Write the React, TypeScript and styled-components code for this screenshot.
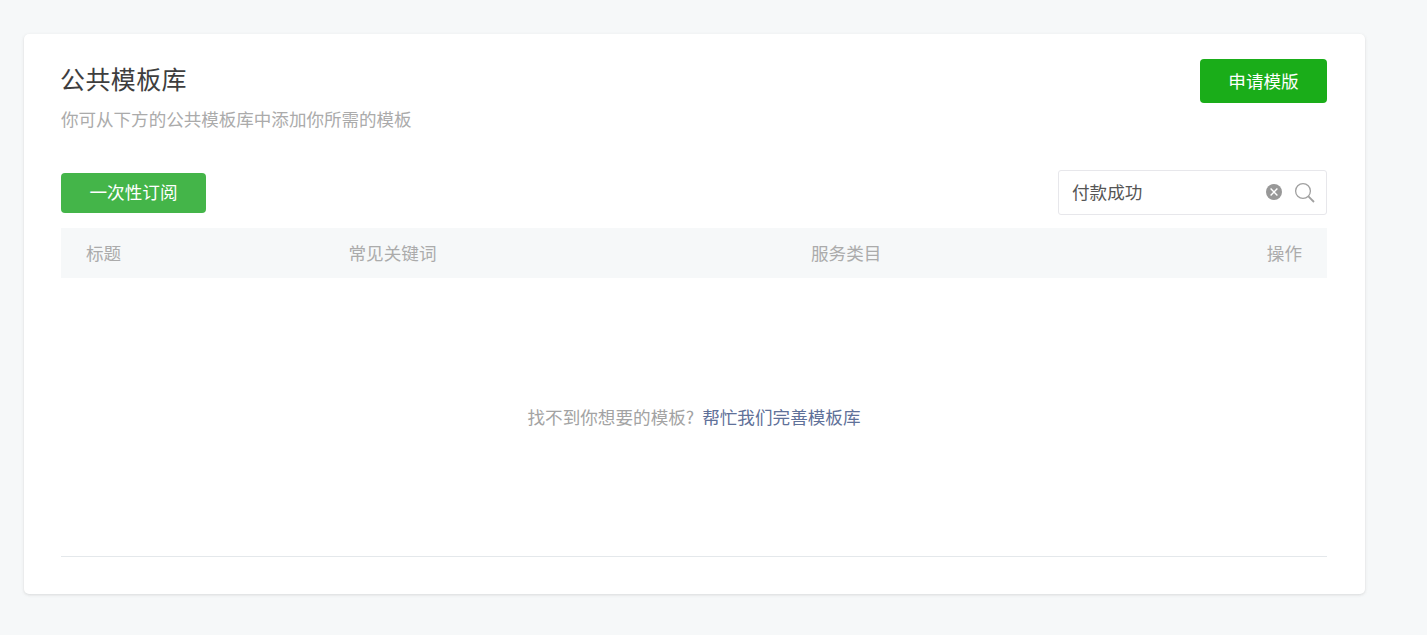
import styled, { createGlobalStyle } from "styled-components";

const GlobalStyle = createGlobalStyle`
    html, body {
        margin: 0;
        padding: 0;
        background: #f6f8f9;
    }
    body {
        font-family: "Noto Sans CJK SC", "Liberation Sans", sans-serif;
    }
`;

const Page = styled.div`
    width: 1427px;
    height: 635px;
    padding: 34px 62px 0 24px;
    box-sizing: border-box;
    overflow: hidden;
`;

const Card = styled.section`
    height: 560px;
    padding: 25px 38px 0 37px;
    box-sizing: border-box;
    background: #fff;
    border-radius: 5px;
    box-shadow: 0 1px 3px rgba(150, 150, 150, 0.3);
    display: flex;
    flex-direction: column;
`;

const Header = styled.header`
    display: flex;
    justify-content: space-between;
    align-items: flex-start;
    height: 111px;
`;

const Title = styled.h2`
    margin: -1px 0 1px -1px;
    font-size: 25px;
    line-height: 40px;
    letter-spacing: 0.4px;
    font-weight: 400;
    color: #3e3e3e;
`;

const Subtitle = styled.p`
    margin: 0;
    font-size: 17.55px;
    line-height: 40px;
    color: #ababab;
`;

const Button = styled.button<{ $light?: boolean }>`
    height: ${(p) => (p.$light ? 40 : 44)}px;
    width: ${(p) => (p.$light ? 145 : 127)}px;
    padding: 0 0 2px;
    border: 0;
    border-radius: 4px;
    font-family: inherit;
    font-size: 17.6px;
    font-weight: 400;
    color: #fff;
    background: ${(p) => (p.$light ? "#44b549" : "#1aad19")};
`;

const Toolbar = styled.div`
    display: flex;
    justify-content: space-between;
    align-items: center;
    height: 45px;
    margin-bottom: 13px;
`;

const Search = styled.div`
    width: 269px;
    height: 45px;
    box-sizing: border-box;
    padding: 0 11px 0 13px;
    border: 1px solid #e7e7eb;
    border-radius: 3px;
    display: flex;
    align-items: center;
    gap: 12px;
`;

const SearchText = styled.span`
    flex: 1;
    padding-bottom: 2px;
    font-size: 17.6px;
    color: #555;
`;

const ClearIcon = styled.svg`
    margin-bottom: 2px;
`;

const TableHead = styled.div`
    display: grid;
    grid-template-columns: 262.5px 462.5px 1fr auto;
    height: 50px;
    padding: 0 25px 2px;
    box-sizing: border-box;
    align-items: center;
    background: #f6f8f9;
    font-size: 17.6px;
    color: #ababab;
`;

const Empty = styled.div`
    height: 279px;
    box-sizing: border-box;
    padding-top: 112px;
    border-bottom: 1px solid #e4e8eb;
    font-size: 17.6px;
    line-height: 54px;
    text-align: center;
    color: #a3a3a3;
`;

const HelpLink = styled.a`
    margin-left: 8px;
    color: #5f7199;
    text-decoration: none;
`;

export default function App() {
    return (
        <Page>
            <GlobalStyle />
            <Card>
                <Header>
                    <div>
                        <Title>公共模板库</Title>
                        <Subtitle>你可从下方的公共模板库中添加你所需的模板</Subtitle>
                    </div>
                    <Button>申请模版</Button>
                </Header>
                <Toolbar>
                    <Button $light>一次性订阅</Button>
                    <Search>
                        <SearchText>付款成功</SearchText>
                        <ClearIcon width="16" height="16" viewBox="0 0 16 16">
                            <circle cx="8" cy="8" r="8" fill="#989898" />
                            <path d="M4.6 4.6l6.8 6.8M11.4 4.6l-6.8 6.8" stroke="#fff" strokeWidth="1.4" />
                        </ClearIcon>
                        <svg width="21" height="21" viewBox="0 0 21 21" fill="none">
                            <circle cx="9" cy="9" r="7.4" stroke="#a0a0a0" strokeWidth="1.3" />
                            <path d="M14.4 14.4l5.6 5.6" stroke="#a0a0a0" strokeWidth="1.8" />
                        </svg>
                    </Search>
                </Toolbar>
                <TableHead>
                    <span>标题</span>
                    <span>常见关键词</span>
                    <span>服务类目</span>
                    <span>操作</span>
                </TableHead>
                <Empty>
                    找不到你想要的模板?
                    <HelpLink href="#">帮忙我们完善模板库</HelpLink>
                </Empty>
            </Card>
        </Page>
    );
}
